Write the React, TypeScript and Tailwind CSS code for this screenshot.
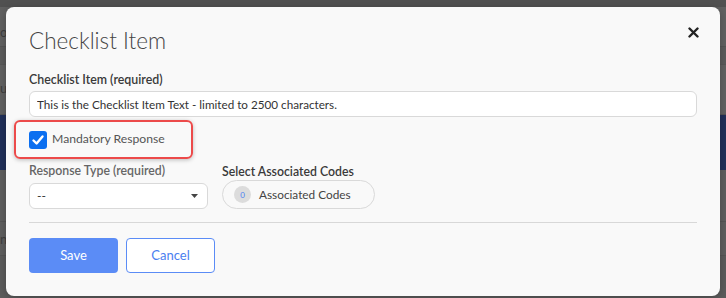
import { useState } from "react";

export default function App() {
  const [mandatory, setMandatory] = useState(true);

  return (
    <div className="relative w-[726px] h-[298px] overflow-hidden bg-[#5e5e5e] font-['Lato',sans-serif]">
      {/* dimmed page behind the dialog */}
      <div className="flex flex-col h-full">
        <div className="h-[7px] bg-[#515151]" />
        <div className="h-[40px] bg-[#616161] border-b border-[#555] text-[#3e3e3e] text-[13px] pt-[16px]">op</div>
        <div className="h-[18px] bg-[#5c5c5c] border-b border-[#585858]" />
        <div className="h-[50px] bg-[#626262] border-b border-[#555] text-[#3e3e3e] text-[13px] pt-[14px]">up</div>
        <div className="h-[55px] bg-[#21305a]" />
        <div className="h-[52px] bg-[#5f5f5f] border-b border-[#555]" />
        <div className="h-[34px] bg-[#5f5f5f] border-b border-[#555] text-[#3e3e3e] text-[13px] pt-[8px]">n</div>
        <div className="flex-1 bg-[#5c5c5c]" />
      </div>

      {/* dialog */}
      <div className="absolute left-[6px] top-[7px] w-[714px] h-[289px] rounded-[8px] bg-[#f9f9f9] shadow-[0_2px_8px_rgba(0,0,0,0.25)] px-[23px] pt-[21px]">
        <div className="flex items-start justify-between">
          <h2 className="text-[22.5px] leading-[26px] font-light text-[#444]">Checklist Item</h2>
          <button className="mt-[-1px] mr-[-2px] text-[#222]">
            <svg width="11" height="11" viewBox="0 0 11 11">
              <path d="M1.5 1.5 L9.5 9.5 M9.5 1.5 L1.5 9.5" stroke="currentColor" strokeWidth="2.4" strokeLinecap="round" />
            </svg>
          </button>
        </div>

        <label className="block mt-[18px] text-[12.4px] leading-[16px] font-semibold text-[#3a3a3a]">Checklist Item (required)</label>
        <input
          type="text"
          readOnly
          value="This is the Checklist Item Text - limited to 2500 characters."
          className="mt-[3px] w-full h-[26px] rounded-[6px] border border-[#d9d9d9] bg-white px-[7px] text-[11.7px] text-[#333] outline-none"
        />

        <div className="mt-[3px] ml-[-15px] w-[179px] h-[39px] rounded-[6px] border-2 border-[#ec4a4a] shadow-[0_1px_4px_rgba(0,0,0,0.25)] flex items-center pl-[13px] gap-[5px]">
          <button
            onClick={() => setMandatory(!mandatory)}
            className={`w-[18px] h-[18px] rounded-[3px] flex items-center justify-center ${mandatory ? "bg-[#0b6ff0]" : "bg-white border border-[#999]"}`}
          >
            {mandatory && (
              <svg width="14" height="14" viewBox="0 0 14 14">
                <path d="M2.5 7.5 L5.6 10.5 L11.5 3.5" fill="none" stroke="white" strokeWidth="2.4" strokeLinecap="round" strokeLinejoin="round" />
              </svg>
            )}
          </button>
          <span className="text-[12.2px] text-[#555]">Mandatory Response</span>
        </div>

        <div className="mt-[4px] flex gap-[14px]">
          <div className="w-[179px]">
            <div className="text-[12.3px] leading-[16px] font-semibold text-[#666]">Response Type (required)</div>
            <div className="mt-[4px] h-[26px] rounded-[6px] border border-[#d9d9d9] bg-white flex items-center justify-between pl-[7px] pr-[9px]">
              <span className="text-[12px] text-[#333]">--</span>
              <svg width="7" height="4" viewBox="0 0 7 4">
                <path d="M0 0 L7 0 L3.5 4 Z" fill="#444" />
              </svg>
            </div>
          </div>
          <div>
            <div className="mt-[1px] text-[12.3px] leading-[16px] font-semibold text-[#3a3a3a]">Select Associated Codes</div>
            <div className="w-[153px] h-[29px] rounded-full border border-[#d9d9d9] flex items-center pl-[11px] gap-[8px]">
              <span className="w-[17px] h-[17px] rounded-full bg-[#dcdcdc] flex items-center justify-center text-[8px] text-[#4a7ef0]">0</span>
              <span className="text-[11.8px] text-[#444]">Associated Codes</span>
            </div>
          </div>
        </div>

        <div className="mt-[13px] h-px bg-[#d8d8d8]" />

        <div className="mt-[15px] flex gap-[8px]">
          <button className="w-[89px] h-[35px] rounded-[4px] bg-[#5b8cf6] text-white text-[13px]">Save</button>
          <button className="w-[89px] h-[35px] rounded-[4px] bg-white border border-[#5b8cf6] text-[#4a7ef0] text-[13px]">Cancel</button>
        </div>
      </div>
    </div>
  );
}
